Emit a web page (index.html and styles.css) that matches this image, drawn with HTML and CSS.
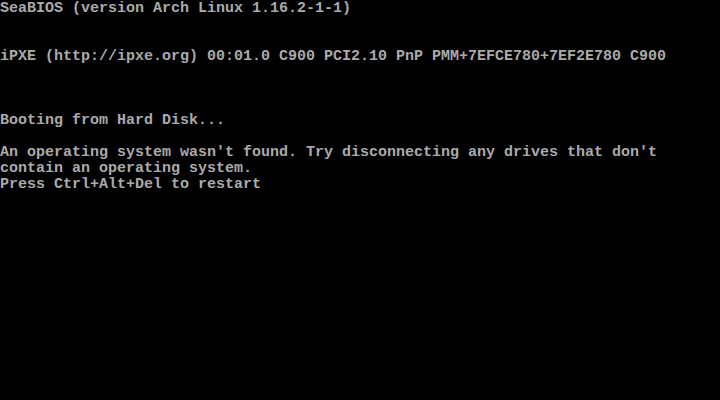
FILE: index.html
```html
<!DOCTYPE html>
<html>
<head>
<meta charset="utf-8">
<link rel="stylesheet" href="styles.css">
</head>
<body>
<div class="screen">
<div class="row">SeaBIOS (version Arch Linux 1.16.2-1-1)</div>
<div class="row"></div>
<div class="row"></div>
<div class="row">iPXE (http://ipxe.org) 00:01.0 C900 PCI2.10 PnP PMM+7EFCE780+7EF2E780 C900</div>
<div class="row"></div>
<div class="row"></div>
<div class="row"></div>
<div class="row">Booting from Hard Disk...</div>
<div class="row"></div>
<div class="row">An operating system wasn't found. Try disconnecting any drives that don't</div>
<div class="row">contain an operating system.</div>
<div class="row">Press Ctrl+Alt+Del to restart</div>
</div>
</body>
</html>
```
FILE: styles.css
```css
html, body {
  margin: 0;
  padding: 0;
  background: #000;
}
.screen {
  box-sizing: border-box;
  width: 720px;
  height: 400px;
  padding-top: 1px;
  background: #000;
  color: #aaaaaa;
  font-family: "Liberation Mono", "DejaVu Sans Mono", monospace;
  font-size: 15px;
  font-weight: bold;
  overflow: hidden;
}
.row {
  height: 16px;
  line-height: 16px;
  white-space: pre;
}
```
